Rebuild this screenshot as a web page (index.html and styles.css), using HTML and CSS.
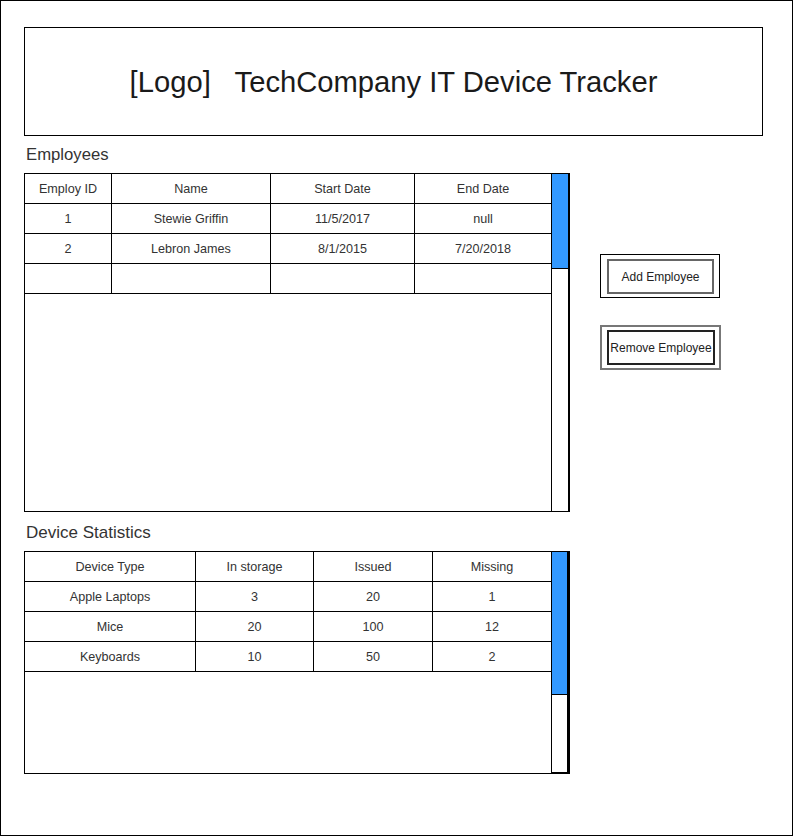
FILE: index.html
```html
<!DOCTYPE html>
<html lang="en">
<head>
  <meta charset="UTF-8" />
  <title>TechCompany IT Device Tracker</title>
  <link rel="stylesheet" href="styles.css">
</head>
<body>
  <div class="frame">
    <div class="header">
      <h1 class="title">[Logo]   TechCompany IT Device Tracker</h1>
    </div>

    <div class="employees-section">
      <div class="left-col">
        <div class="section-label">Employees</div>
        <div class="table-box emp">
          <div class="grid">
            <div class="row">
              <div class="cell">Employ ID</div>
              <div class="cell">Name</div>
              <div class="cell">Start Date</div>
              <div class="cell">End Date</div>
            </div>
            <div class="row">
              <div class="cell">1</div>
              <div class="cell">Stewie Griffin</div>
              <div class="cell">11/5/2017</div>
              <div class="cell">null</div>
            </div>
            <div class="row">
              <div class="cell">2</div>
              <div class="cell">Lebron James</div>
              <div class="cell">8/1/2015</div>
              <div class="cell">7/20/2018</div>
            </div>
            <div class="row">
              <div class="cell"></div>
              <div class="cell"></div>
              <div class="cell"></div>
              <div class="cell"></div>
            </div>
          </div>
          <div class="scrollbar">
            <div class="thumb"></div>
          </div>
        </div>
      </div>

      <div class="actions">
        <button class="btn-outer">
          <span class="btn-inner">Add Employee</span>
        </button>
        <button class="btn-outer alt">
          <span class="btn-inner">Remove Employee</span>
        </button>
      </div>
    </div>

    <div class="section-label device-label">Device Statistics</div>
    <div class="table-box dev">
      <div class="grid">
        <div class="row">
          <div class="cell">Device Type</div>
          <div class="cell">In storage</div>
          <div class="cell">Issued</div>
          <div class="cell">Missing</div>
        </div>
        <div class="row">
          <div class="cell">Apple Laptops</div>
          <div class="cell">3</div>
          <div class="cell">20</div>
          <div class="cell">1</div>
        </div>
        <div class="row">
          <div class="cell">Mice</div>
          <div class="cell">20</div>
          <div class="cell">100</div>
          <div class="cell">12</div>
        </div>
        <div class="row">
          <div class="cell">Keyboards</div>
          <div class="cell">10</div>
          <div class="cell">50</div>
          <div class="cell">2</div>
        </div>
      </div>
      <div class="scrollbar">
        <div class="thumb"></div>
      </div>
    </div>
  </div>
</body>
</html>
```

FILE: styles.css
```css
body {
  margin: 0;
  font-family: "Liberation Sans", Arial, sans-serif;
  color: #333;
  background: #fff;
}
.frame {
  width: 793px;
  height: 836px;
  box-sizing: border-box;
  border: 1px solid #000;
  padding: 26px 0 0 23px;
}
.header {
  width: 739px;
  height: 109px;
  box-sizing: border-box;
  border: 1px solid #000;
  display: flex;
  align-items: center;
  justify-content: center;
  padding-top: 2px;
}
.title {
  margin: 0;
  font-size: 29.2px;
  font-weight: normal;
  color: #1a1a1a;
  white-space: pre;
}
.section-label {
  font-size: 16.7px;
  line-height: 20px;
  padding: 9px 0 8px 2px;
}
.device-label {
  font-size: 17px;
  padding: 11px 0 8px 2px;
}
.employees-section {
  display: flex;
}
.table-box {
  width: 546px;
  box-sizing: border-box;
  border: 1px solid #000;
  border-right: none;
  display: flex;
}
.table-box.emp {
  height: 339px;
}
.table-box.dev {
  height: 223px;
}
.grid {
  width: 526px;
}
.row {
  display: grid;
  height: 30px;
}
.emp .row {
  grid-template-columns: 87px 159px 144px 136px;
}
.dev .row {
  grid-template-columns: 171px 118px 119px 118px;
}
.cell {
  box-sizing: border-box;
  border-bottom: 1px solid #000;
  border-right: 1px solid #000;
  display: flex;
  align-items: center;
  justify-content: center;
  font-size: 12.6px;
  padding-top: 1px;
}
.row .cell:last-child {
  border-right: none;
}
.scrollbar {
  flex: 1;
  border-left: 1px solid #000;
  border-right: 2px solid #000;
}
.dev .scrollbar {
  border-right: 3px solid #000;
  border-bottom: 1px solid #000;
}
.thumb {
  background-color: #3399ff;
  border-bottom: 1px solid #000;
}
.emp .thumb {
  height: 94px;
}
.dev .thumb {
  height: 142px;
}
.actions {
  display: flex;
  flex-direction: column;
  align-items: flex-start;
  margin-left: 30px;
  padding-top: 118px;
}
.btn-outer {
  display: block;
  width: 120px;
  box-sizing: border-box;
  margin: 0 0 27px 0;
  padding: 4px 5px 3px 6px;
  border: 1px solid #000;
  background: #fff;
  font-family: "Liberation Sans", Arial, sans-serif;
  cursor: pointer;
}
.btn-outer.alt {
  width: 121px;
  padding: 3px 4px 3px 5px;
  border: 2px solid #777;
}
.btn-inner {
  display: flex;
  align-items: center;
  justify-content: center;
  height: 35px;
  box-sizing: border-box;
  border: 2px solid #666;
  font-size: 12px;
  color: #222;
  white-space: nowrap;
}
.alt .btn-inner {
  border-color: #222;
}
```
